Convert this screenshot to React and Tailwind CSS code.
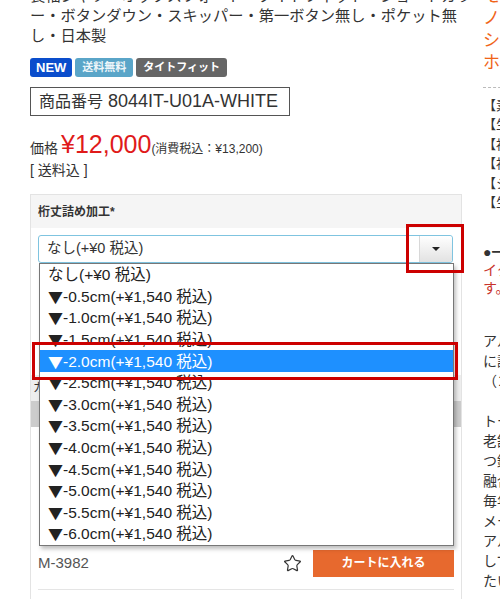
import { Star } from "lucide-react";

const options = [
    { mark: "", text: "なし(+¥0 税込)" },
    { mark: "▼", text: "-0.5cm(+¥1,540 税込)" },
    { mark: "▼", text: "-1.0cm(+¥1,540 税込)" },
    { mark: "▼", text: "-1.5cm(+¥1,540 税込)" },
    { mark: "▼", text: "-2.0cm(+¥1,540 税込)" },
    { mark: "▼", text: "-2.5cm(+¥1,540 税込)" },
    { mark: "▼", text: "-3.0cm(+¥1,540 税込)" },
    { mark: "▼", text: "-3.5cm(+¥1,540 税込)" },
    { mark: "▼", text: "-4.0cm(+¥1,540 税込)" },
    { mark: "▼", text: "-4.5cm(+¥1,540 税込)" },
    { mark: "▼", text: "-5.0cm(+¥1,540 税込)" },
    { mark: "▼", text: "-5.5cm(+¥1,540 税込)" },
    { mark: "▼", text: "-6.0cm(+¥1,540 税込)" },
];

const specs = [
    "【素材】綿100%",
    "【生地】オックスフォード",
    "【衿型】ボタンダウン・スキッパー",
    "【袖】長袖",
    "【シルエット】タイトフィット",
    "【生産国】日本製",
];

const story = [
    "アルビニ社の上質なコットンを贅沢",
    "に試用したシャツです。",
    "（コットン100%）",
    "",
    "トーマスメイソンと並ぶイタリアの",
    "老舗生地メーカーの生地を使用し、",
    "つ鍛え抜かれた職人の技と最新技術が",
    "融合した仕立てとなっております。",
    "毎年多くのブランドに採用される",
    "メーカーならではの品質をお楽しみ",
    "アルビニならではの光沢感を生か",
    "してシンプルながら存在感のある",
    "たいへん着心地の良い一着です。",
];

export default function App() {
    return (
        <div className="relative w-[500px] h-[599px] overflow-hidden bg-white flex font-['Liberation_Sans','Noto_Sans_CJK_JP',sans-serif] text-[#333]">
            {/* main column */}
            <div className="ml-[30px] -mt-[14px] w-[432px] shrink-0 flex flex-col">
                <div className="text-[15.25px] leading-[20px] whitespace-nowrap">
                    <div>長袖シャツ・オックスフォード・タイトフィット・ショートカラ</div>
                    <div>ー・ボタンダウン・スキッパー・第一ボタン無し・ポケット無</div>
                    <div>し・日本製</div>
                </div>

                <div className="mt-[12px] flex gap-[3px] h-[19px]">
                    <span className="px-[6px] rounded-[3px] bg-[#0a4dcc] text-white text-[13px] font-bold leading-[19px]">NEW</span>
                    <span className="px-[7px] rounded-[3px] bg-[#5aa5c8] text-[#eef6fa] text-[11px] font-bold leading-[19px]">送料無料</span>
                    <span className="px-[7px] rounded-[3px] bg-[#666] text-white text-[11px] font-bold leading-[19px]">タイトフィット</span>
                </div>

                <div className="mt-[10px] w-[260px] h-[33px] border border-[#555] flex items-center pl-[8px] whitespace-nowrap">
                    <span className="text-[16px]">商品番号</span>
                    <span className="ml-[5px] text-[18px]">8044IT-U01A-WHITE</span>
                </div>

                <div className="mt-[16px] h-[25px] flex items-baseline whitespace-nowrap">
                    <span className="text-[14px]">価格</span>
                    <span className="ml-[3px] text-[25px] leading-[25px] text-[#e01a1a]">¥12,000</span>
                    <span className="text-[12px]">(消費税込：¥13,200)</span>
                </div>
                <div className="mt-[3px] text-[14px] leading-[20px]">[ 送料込 ]</div>

                {/* option panel */}
                <div className="mt-[14px] border border-[#e3e3e3] flex flex-col">
                    <div className="h-[33px] bg-[#f5f5f5] px-[7px] flex items-center text-[12px] font-bold">桁丈詰め加工*</div>

                    <div className="relative pl-[7px] pr-[8px] pt-[7px]">
                        <div className="h-[28px] border border-[#7fc4e0] rounded-[3px] flex bg-white">
                            <div className="flex-1 flex items-center pl-[8px] text-[14.5px]">なし(+¥0 税込)</div>
                            <div className="w-[33px] border-l border-[#d8d8d8] bg-gradient-to-b from-white to-[#e2e2e2] flex items-center justify-center rounded-r-[3px]">
                                <span className="w-0 h-0 border-l-[4px] border-r-[4px] border-t-[4px] border-l-transparent border-r-transparent border-t-[#222]" />
                            </div>
                        </div>

                        <div className="absolute z-10 top-[35px] left-[8px] w-[415px] bg-white border border-[#777] shadow-[2px_3px_4px_rgba(0,0,0,0.25)]">
                            {options.map((option, index) => (
                                <div
                                    key={index}
                                    className={index === 4
                                        ? "h-[21.6px] pl-[8px] flex items-center text-[15.5px] whitespace-nowrap bg-[#1e90ff] text-white"
                                        : "h-[21.6px] pl-[8px] flex items-center text-[15.5px] whitespace-nowrap text-[#222]"}
                                >
                                    {option.mark && (
                                        <span className="font-['Noto_Sans_CJK_JP',sans-serif] text-[15px] leading-none">{option.mark}</span>
                                    )}
                                    <span>{option.text}</span>
                                </div>
                            ))}
                        </div>
                    </div>

                    <div className="h-[112px]" />
                    <div className="h-[26px] bg-[#eee] pl-[2px] flex items-center text-[12px]">カラー・サイズ</div>
                    <div className="h-[26px] bg-[#ccc]" />
                    <div className="h-[122px]" />

                    <div className="h-[28px] pl-[7px] pr-[7px] flex items-center">
                        <span className="text-[15px] text-[#555]">M-3982</span>
                        <Star className="ml-auto w-[19px] h-[19px] text-[#333]" strokeWidth={1.5} />
                        <button className="ml-[11px] w-[141px] h-[27px] bg-[#e7692e] text-white text-[12px] font-bold">カートに入れる</button>
                    </div>
                    <div className="mt-[12px] mx-[7px] border-t border-[#e5e5e5]" />
                    <div className="h-[20px]" />
                </div>
            </div>

            {/* side column */}
            <div className="ml-[21px] -mt-[14px] w-[250px] shrink-0 flex flex-col whitespace-nowrap">
                <div className="text-[17px] leading-[22px] text-[#f06418]">
                    <div>モダンな着こなしに</div>
                    <div>ノーブルな印象を添える</div>
                    <div>シンプルな白シャツ</div>
                    <div>ホワイトオックスフォード</div>
                </div>
                <div className="mt-[13px] border-t border-dashed border-[#bbb]" />
                <div className="mt-[8px] text-[13px] leading-[19.4px]">
                    {specs.map((spec, index) => (
                        <div key={index}>{spec}</div>
                    ))}
                </div>

                <div className="mt-[31px] text-[14px] leading-[18px]">
                    <div className="font-bold">●一部商品について</div>
                    <div className="text-[#c8332b]">イクオリティの高い生地を使用しておりま</div>
                    <div className="text-[#c8332b]">す。</div>
                </div>

                <div className="mt-[34px] text-[14px] leading-[20px]">
                    {story.map((line, index) => (
                        <div key={index} className="h-[20px]">{line}</div>
                    ))}
                </div>
            </div>

            {/* annotation boxes */}
            <div className="absolute left-[406px] top-[224px] w-[58px] h-[49px] border-[3px] border-[#cc0000] z-20" />
            <div className="absolute left-[32px] top-[342px] w-[426px] h-[38px] border-[3px] border-[#cc0000] z-20" />
        </div>
    );
}
